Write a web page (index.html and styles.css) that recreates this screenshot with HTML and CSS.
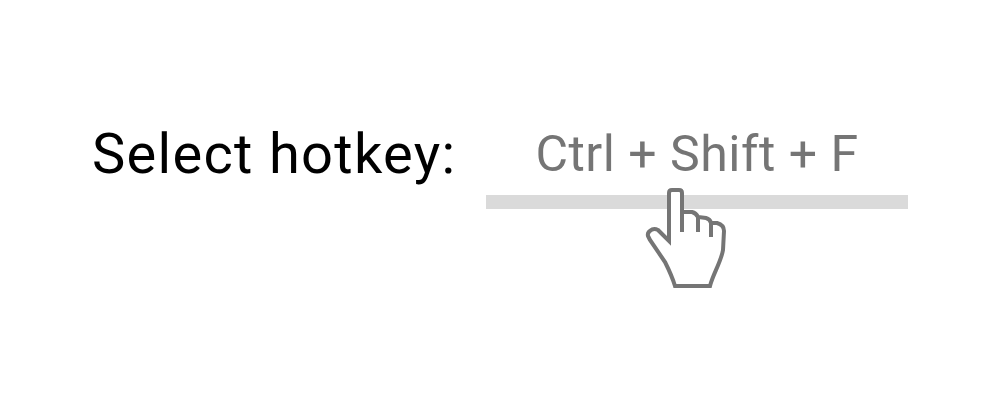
FILE: index.html
```html
<!DOCTYPE html>
<html lang="en">

<head>
    <meta charset="UTF-8">
    <title>Select hotkey</title>
    <link rel="stylesheet" href="styles.css">
</head>

<body>
    <div class="hotkey-row">
        <span class="hotkey-label">Select hotkey:</span>
        <div class="hotkey-field">
            <div class="hotkey-value">Ctrl + Shift + F</div>
            <div class="hotkey-line"></div>
            <!-- Cursor over the field -->
            <svg class="hand" width="90" height="110" viewBox="0 0 90 110">
                <path d="M10 56 L8 52 Q7 48 12 45.500 Q15 44.500 18 46 L29 57 L29 9 Q29 6 32 6 L39 6 Q42 6 42 9 L42 28 L52 28 Q56 29 58 33 L66 34 Q70 35 71 39 L77 39 Q84 41 84 47 L83 66 C81 78 73 90 70 102 L35 102 C32 92 29 86 25 78 Z" fill="#fff" stroke="#757575" stroke-width="4" stroke-linejoin="miter" />
                <path d="M42 28 L42 48 M58 33 L58 48 M71 39 L71 53" fill="none" stroke="#757575" stroke-width="4" />
            </svg>
        </div>
    </div>
</body>

</html>
```

FILE: styles.css
```css
body {
    margin: 0;
    min-height: 400px;
    background-color: #fff;
    font-family: Roboto, sans-serif;
}

.hotkey-row {
    display: flex;
    align-items: flex-start;
    min-height: 400px;
    box-sizing: border-box;
    padding: 124px 92px 0;
}

.hotkey-label {
    width: 394px;
    font-size: 56px;
    line-height: 60px;
    letter-spacing: 1.3px;
    color: #000;
}

.hotkey-field {
    position: relative;
    width: 422px;
}

.hotkey-value {
    height: 71px;
    font-size: 50px;
    line-height: 60px;
    letter-spacing: 0.5px;
    text-align: center;
    color: #757575;
}

.hotkey-line {
    height: 14px;
    background-color: #dadada;
}

.hand {
    position: absolute;
    left: 154px;
    top: 60px;
}
```
